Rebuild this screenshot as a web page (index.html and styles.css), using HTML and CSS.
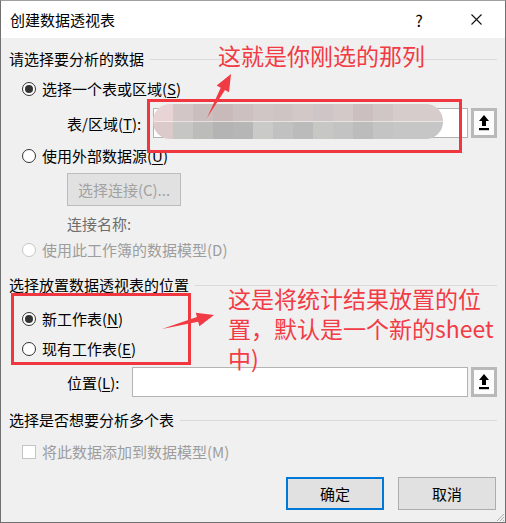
FILE: index.html
```html
<!DOCTYPE html>
<html lang="zh-CN">
  <head>
    <meta charset="UTF-8" />
    <title>创建数据透视表</title>
    <link rel="stylesheet" href="styles.css">
  </head>
  <body>
    <div class="window">
      <header class="titlebar">
        <span class="title">创建数据透视表</span>
        <span class="cap help">?</span>
        <span class="cap close">
          <svg width="11" height="11" viewBox="0 0 11 11"><path d="M0.5 0.5 L10.5 10.5 M10.5 0.5 L0.5 10.5" stroke="#111" stroke-width="1.1" fill="none"/></svg>
        </span>
      </header>

      <main class="content">
        <!-- 数据源 -->
        <div class="group-title g1"><span>请选择要分析的数据</span><i class="rule"></i></div>
        <label class="option o-range"><span class="radio checked"></span><span>选择一个表或区域(<u>S</u>)</span></label>
        <div class="field f-range">
          <span class="field-label">表/区域(<u>T</u>):</span>
          <div class="input"><div class="mosaic"></div></div>
          <button class="pick" type="button">
            <svg width="10" height="16" viewBox="0 0 10 16"><polygon points="5,0 10,6 7,6 7,11 3,11 3,6 0,6" fill="#000"/><rect x="0" y="13" width="10" height="2.2" fill="#000"/></svg>
          </button>
        </div>
        <label class="option o-external"><span class="radio"></span><span>使用外部数据源(<u>U</u>)</span></label>
        <button class="connect" type="button" disabled>选择连接(C)...</button>
        <div class="conn-name">连接名称:</div>
        <label class="option o-model disabled"><span class="radio"></span><span>使用此工作簿的数据模型(D)</span></label>

        <!-- 放置位置 -->
        <div class="group-title g2"><span>选择放置数据透视表的位置</span><i class="rule"></i></div>
        <label class="option o-new"><span class="radio checked"></span><span>新工作表(<u>N</u>)</span></label>
        <label class="option o-exist"><span class="radio"></span><span>现有工作表(<u>E</u>)</span></label>
        <div class="field f-place">
          <span class="field-label">位置(<u>L</u>):</span>
          <div class="input"></div>
          <button class="pick" type="button">
            <svg width="10" height="16" viewBox="0 0 10 16"><polygon points="5,0 10,6 7,6 7,11 3,11 3,6 0,6" fill="#000"/><rect x="0" y="13" width="10" height="2.2" fill="#000"/></svg>
          </button>
        </div>

        <!-- 多个表 -->
        <div class="group-title g3"><span>选择是否想要分析多个表</span><i class="rule"></i></div>
        <label class="option o-add disabled"><span class="check"></span><span>将此数据添加到数据模型(M)</span></label>

        <div class="footer">
          <button class="btn default" type="button">确定</button>
          <button class="btn" type="button">取消</button>
        </div>
      </main>

      <!-- 标注 -->
      <div class="mark mark-range"></div>
      <div class="mark mark-place"></div>
      <div class="note note-range">这就是你刚选的那列</div>
      <div class="note note-place">这是将统计结果放置的位<br>置，默认是一个新的sheet<br>中)</div>
      <svg class="arrows" width="506" height="523" viewBox="0 0 506 523">
        <polygon points="207,118 220.7,87.7 216.7,85.6 231,74 229,92.3 225,90.1" fill="#f03a44"/>
        <polygon points="162,329 196.9,317 195.8,312.7 214,315 199.4,326.2 198.2,321.8" fill="#f03a44"/>
      </svg>
      <svg class="grip" width="10" height="10" viewBox="0 0 10 10">
        <path d="M9 2 L2 9 M9 5 L5 9 M9 8 L8 9" stroke="#b0b0b0" stroke-width="1" fill="none"/>
      </svg>
    </div>
  </body>
</html>
```

FILE: styles.css
```css
* {
  box-sizing: border-box;
  margin: 0;
  padding: 0;
}

html,
body {
  width: 506px;
  height: 523px;
  overflow: hidden;
  background: #fff;
}

body {
  font-family: "Microsoft YaHei UI", "Noto Sans CJK SC", "Noto Sans", sans-serif;
  font-size: 15px;
  color: #000;
}

.window {
  position: relative;
  width: 506px;
  height: 523px;
  background: #f0f0f0;
  border: 1px solid #707070;
  border-top-color: #a0a0a0;
}

.titlebar {
  height: 37px;
  background: #fff;
  display: flex;
  align-items: center;
  padding: 0 6px 0 9px;
}

.title {
  flex: 1;
  line-height: 22px;
}

.cap {
  width: 46px;
  height: 37px;
  display: flex;
  align-items: center;
  justify-content: center;
}

.help {
  margin-right: 11px;
  font-size: 16px;
}

.content {
  display: flex;
  flex-direction: column;
  padding: 10px 8px 0 8px;
}

.group-title {
  display: flex;
  align-items: center;
  gap: 6px;
  height: 22px;
  line-height: 22px;
}

.group-title .rule {
  flex: 1;
  height: 1px;
  background: #dadada;
}

.g2 {
  margin-top: 13px;
}

.g3 {
  margin-top: 12px;
}

.option {
  display: flex;
  align-items: center;
  height: 22px;
  line-height: 22px;
  padding-left: 13px;
  gap: 6px;
}

.option u,
.field-label u {
  text-underline-offset: 2px;
}

.o-range {
  margin-top: 8px;
}

.o-external {
  margin-top: 7px;
}

.o-model {
  margin-top: 4px;
}

.o-new {
  margin-top: 12px;
}

.o-exist {
  margin-top: 8px;
}

.o-add {
  margin-top: 10px;
}

.option.disabled {
  color: #9d9d9d;
}

.radio {
  position: relative;
  width: 14px;
  height: 14px;
  border: 1px solid #333;
  border-radius: 50%;
  background: #fff;
}

.radio.checked::after {
  content: "";
  position: absolute;
  left: 2px;
  top: 2px;
  width: 8px;
  height: 8px;
  border-radius: 50%;
  background: #333;
}

.disabled .radio {
  border-color: #c6c6c6;
}

.check {
  width: 14px;
  height: 14px;
  border: 1px solid #c4c4c4;
  background: #fff;
}

.field {
  display: flex;
  align-items: center;
  height: 30px;
  padding-left: 58px;
}

.f-range {
  margin-top: 8px;
}

.f-place {
  margin-top: 7px;
}

.f-range .field-label {
  width: 86px;
}

.f-place .field-label {
  width: 65px;
}

.input {
  position: relative;
  flex: 1;
  height: 30px;
  background: #fff;
  border: 1px solid #b3b3b3;
  margin-right: 3px;
}

.mosaic {
  position: absolute;
  left: -1px;
  top: -5px;
  width: 290px;
  height: 35px;
  border-radius: 17px;
  filter: blur(0.6px);
  background:
    linear-gradient(to right, #e8d4d4 0 20px, #d2c6c6 20px 40px, #cbbebe 40px 60px, #c8baba 60px 80px, #ccc0c0 80px 100px, #d1c6c6 100px 120px, #cfc4c4 120px 140px, #d3c8c8 140px 160px, #cec6c6 160px 180px, #d4c9c9 180px 200px, #cbbfbf 200px 220px, #d0c6c6 220px 240px, #d6cccc 240px 290px) top / 100% 50% no-repeat,
    linear-gradient(to right, #dccaca 0 20px, #c6c6c4 20px 40px, #bcbdbb 40px 60px, #b4b4b4 60px 80px, #b6b6b6 80px 100px, #cacac8 100px 120px, #c1c1c1 120px 140px, #bbbbbb 140px 160px, #c7c7c4 160px 180px, #c3c3c3 180px 200px, #bcbcbc 200px 220px, #c4c4c4 220px 240px, #c6c6c6 240px 290px) bottom / 100% 50% no-repeat;
}

.pick {
  width: 26px;
  height: 30px;
  background: #fcfcfc;
  border: 3px solid #b9b9b9;
  display: flex;
  align-items: center;
  justify-content: center;
}

.connect {
  margin: 6px 0 0 58px;
  width: 114px;
  height: 33px;
  font: inherit;
  color: #a2a2a2;
  background: #e1e1e1;
  border: 1px solid #bdbdbd;
}

.conn-name {
  margin: 7px 0 0 58px;
  height: 22px;
  line-height: 22px;
  color: #6d6d6d;
}

.footer {
  display: flex;
  justify-content: flex-end;
  gap: 14px;
  margin-top: 14px;
  padding-right: 1px;
}

.btn {
  width: 98px;
  height: 33px;
  font: inherit;
  color: #000;
  background: #e1e1e1;
  border: 1px solid #adadad;
}

.btn.default {
  border: 2px solid #0078d7;
}

.mark {
  position: absolute;
  border: 3px solid #f0373f;
}

.mark-range {
  left: 146px;
  top: 98px;
  width: 315px;
  height: 54px;
}

.mark-place {
  left: 10px;
  top: 292px;
  width: 180px;
  height: 72px;
}

.note {
  position: absolute;
  font-size: 23px;
  color: #f23b45;
  white-space: nowrap;
}

.note-range {
  left: 217px;
  top: 41px;
  line-height: 26px;
}

.note-place {
  left: 227px;
  top: 282px;
  line-height: 30px;
}

.arrows {
  position: absolute;
  left: -1px;
  top: -1px;
  pointer-events: none;
}

.grip {
  position: absolute;
  right: 0;
  bottom: 0;
}
```
